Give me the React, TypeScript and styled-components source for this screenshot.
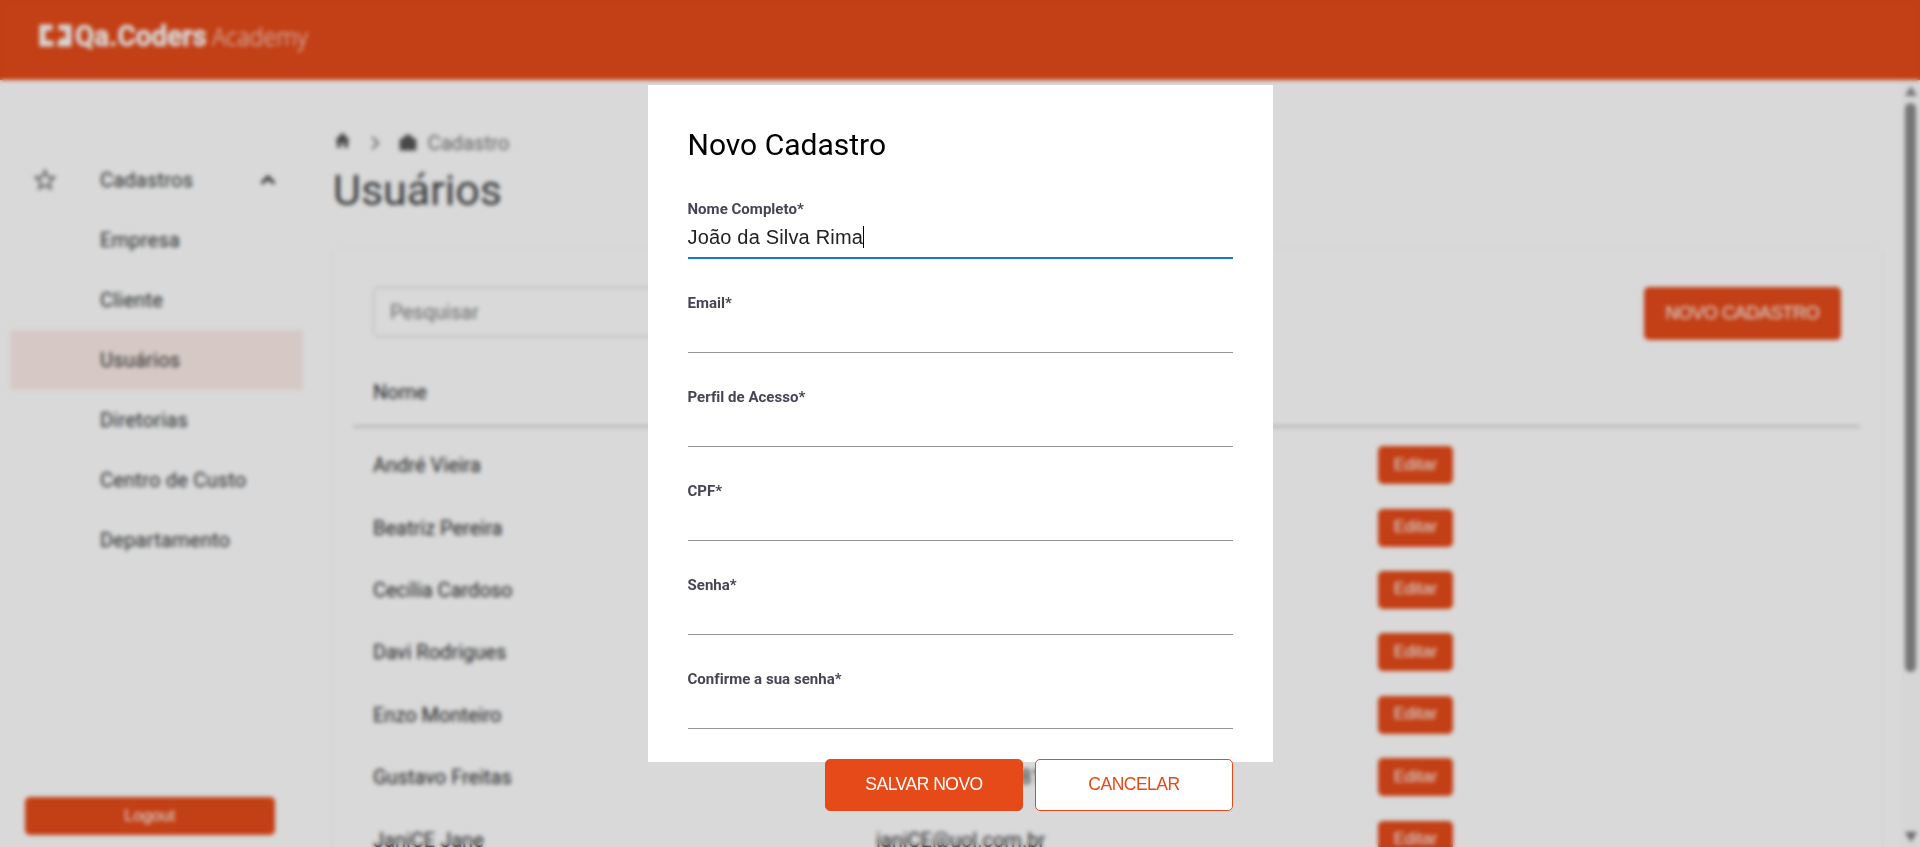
import React from 'react';
import styled, { createGlobalStyle } from 'styled-components';

const orange = '#e64a19';
const roboto = "Roboto, 'Noto Sans', sans-serif";
const arial = "'Liberation Sans', Arial, sans-serif";

const GlobalStyle = createGlobalStyle`
  * { box-sizing: border-box; }
  body { margin: 0; background: #fff; overflow: hidden; font-family: ${roboto}; }
  h1, h2 { margin: 0; font-weight: 400; }
`;

const Page = styled.div`
  display: flex;
  flex-direction: column;
  height: 847px;
  overflow: hidden;
`;

const Header = styled.header`
  flex: none;
  height: 80px;
  padding: 10px 0 0 39px;
  background: ${orange};
`;

const Body = styled.div`
  flex: 1;
  min-height: 0;
  display: flex;
`;

const Sidebar = styled.nav`
  flex: none;
  width: 313px;
  display: flex;
  flex-direction: column;
  padding: 70px 10px 12px;
`;

const NavItem = styled.div<{ $active?: boolean }>`
  flex: none;
  height: 60px;
  display: flex;
  align-items: center;
  width: 293px;
  padding: 0 22px 0 90px;
  border-radius: 4px;
  background: ${p => (p.$active ? 'rgba(230, 74, 25, 0.1)' : 'transparent')};
  font-size: 20px;
  letter-spacing: 0.22px;
  color: #2e3133;
`;

const NavGroup = styled(NavItem)`
  justify-content: space-between;
  padding-left: 21px;
`;

const GroupLabel = styled.span`
  flex: 1;
  margin-left: 41px;
`;

const Logout = styled.button`
  flex: none;
  height: 38.5px;
  margin: auto 28px 0 14.5px;
  padding: 0;
  border: 0;
  border-radius: 5px;
  background: ${orange};
  color: #fff;
  font: 16.7px ${arial};
`;

const Main = styled.main`
  flex: 1;
  min-width: 0;
  padding: 46px 19px 0 20px;
`;

const Crumbs = styled.div`
  display: flex;
  align-items: center;
  height: 34px;
  color: #777;
  font-size: 20.2px;
`;

const HomeIcon = styled.svg`
  margin: 0 1px 5px 0;
`;

const CrumbText = styled.span`
  margin-left: 9.5px;
`;

const PageTitle = styled.h1`
  height: 60px;
  line-height: 61px;
  font-size: 43px;
  color: #3c4043;
`;

const Card = styled.section`
  margin-top: 29px;
  height: 700px;
  padding: 38px 22px 0 20px;
  border-radius: 5px;
  box-shadow: 0 1px 3px rgba(0, 0, 0, 0.12);
`;

const Toolbar = styled.div`
  display: flex;
  justify-content: space-between;
  align-items: flex-start;
  padding: 0 19px 0 20px;
`;

const Search = styled.div`
  width: 375px;
  height: 50px;
  padding-left: 16px;
  border: 1.5px solid #ccc;
  border-radius: 5px;
  display: flex;
  align-items: center;
  font-size: 20px;
  color: #808080;
`;

const NewButton = styled.button`
  width: 197px;
  height: 53px;
  padding: 0 0 1px;
  border: 0;
  border-radius: 5px;
  background: ${orange};
  color: #fff;
  font: 18.2px ${arial};
  letter-spacing: -0.45px;
`;

const Row = styled.div`
  display: grid;
  grid-template-columns: 503px 502px 1fr;
  align-items: center;
  height: 62.4px;
  padding-left: 20px;
  font-size: 20px;
  color: #27282a;
`;

const HeadRow = styled(Row)`
  height: 88px;
  padding-top: 19px;
  border-bottom: 3px solid #dcdcdc;
  margin-bottom: 6px;
`;

const EditButton = styled.button`
  width: 75px;
  height: 38px;
  padding: 0 0 1px;
  border: 0;
  border-radius: 5px;
  background: ${orange};
  color: #fff;
  font: 16.7px ${arial};
`;

const ScrollTrack = styled.div`
  flex: none;
  width: 19px;
  display: flex;
  flex-direction: column;
  align-items: center;
  padding: 6px 0 5px;
  background: #fcfcfc;
`;

const Thumb = styled.div`
  width: 11px;
  height: 569px;
  margin: 7px 0 auto;
  border-radius: 6px;
  background: #8b8b8b;
`;

const Backdrop = styled.div`
  position: fixed;
  inset: 0;
  display: flex;
  justify-content: center;
  align-items: flex-start;
  padding-top: 85px;
  background: rgba(0, 0, 0, 0.15);
  backdrop-filter: blur(2px);
`;

const Modal = styled.div`
  width: 625px;
  height: 677px;
  padding: 40px 40px 0;
  background: #fff;
`;

const ModalTitle = styled.h2`
  height: 40px;
  line-height: 40px;
  font-size: 30px;
  color: #000;
`;

const Field = styled.label`
  display: flex;
  flex-direction: column;
  height: 94px;
  padding-top: 34px;
`;

const FieldLabel = styled.span`
  height: 20px;
  line-height: 20px;
  font-size: 15px;
  font-weight: 700;
  letter-spacing: 0.03px;
  color: #464555;
`;

const FieldValue = styled.span<{ $focused?: boolean }>`
  display: flex;
  align-items: center;
  height: 40px;
  padding-bottom: 2px;
  border-bottom: ${p => (p.$focused ? '2px solid #1976d2' : '1px solid #949494')};
  font: 20px ${arial};
  letter-spacing: 0.18px;
  color: #212121;
`;

const Caret = styled.i`
  width: 1px;
  height: 22px;
  background: #000;
`;

const Actions = styled.div`
  display: flex;
  justify-content: flex-end;
  gap: 12px;
  margin-top: 30px;
`;

const ActionButton = styled.button<{ $outlined?: boolean }>`
  width: 198px;
  height: 52px;
  padding: 0 0 1px 1px;
  border: 1px solid ${orange};
  border-radius: 5px;
  background: ${p => (p.$outlined ? '#fff' : orange)};
  color: ${p => (p.$outlined ? orange : '#fff')};
  font: 17.5px ${arial};
  letter-spacing: -0.5px;
`;

const navItems = ['Empresa', 'Cliente', 'Usuários', 'Diretorias', 'Centro de Custo', 'Departamento'];

const users: { name: string; email?: string }[] = [
  { name: 'André Vieira' },
  { name: 'Beatriz Pereira' },
  { name: 'Cecília Cardoso' },
  { name: 'Davi Rodrigues' },
  { name: 'Enzo Monteiro' },
  { name: 'Gustavo Freitas', email: 'gustavo.freitas181@qa.com' },
  { name: 'JaniCE Jane', email: 'janiCE@uol.com.br' },
];

const fields = [
  { label: 'Nome Completo*', value: 'João da Silva Rima' },
  { label: 'Email*' },
  { label: 'Perfil de Acesso*' },
  { label: 'CPF*' },
  { label: 'Senha*' },
  { label: 'Confirme a sua senha*' },
];

const Logo = () => (
  <svg width="275" height="56" viewBox="0 0 275 56">
    <path d="M0.500 14.500h13v6h-7v10h8v6h-14zM19.500 14.500h13v22h-14v-5l5-4.500 3 3v-9.500h-7z" fill="#fff" />
    <text x="36" y="36" fontFamily="Roboto, sans-serif" fontWeight="700" fontSize="30" fill="#fff" stroke="#fff" strokeWidth="0.5" textLength="132" lengthAdjust="spacingAndGlyphs">Qa.Coders</text>
    <text x="173" y="35.5" fontFamily="Noto Sans, sans-serif" fontWeight="300" fontSize="25.5" fill="#fff" fillOpacity="0.85" textLength="96" lengthAdjust="spacingAndGlyphs">Academy</text>
  </svg>
);

export default function App() {
  return (
    <>
      <GlobalStyle />
      <Page>
        <Header><Logo /></Header>
        <Body>
          <Sidebar>
            <NavGroup>
              <svg width="28" height="28" viewBox="0 0 24 24" fill="#666">
                <path d="M22 9.24l-7.19-.62L12 2 9.19 8.63 2 9.24l5.46 4.73L5.82 21 12 17.27 18.18 21l-1.63-7.03L22 9.24zM12 15.4l-3.76 2.27 1-4.28-3.32-2.88 4.38-.38L12 6.1l1.71 4.04 4.38.38-3.32 2.88 1 4.28L12 15.4z" />
              </svg>
              <GroupLabel>Cadastros</GroupLabel>
              <svg width="26" height="26" viewBox="0 0 24 24" fill="#333"><path d="M12 8l-6 6 1.41 1.41L12 10.83l4.59 4.58L18 14z" stroke="#333" strokeWidth="1" /></svg>
            </NavGroup>
            {navItems.map(item => (
              <NavItem key={item} $active={item === 'Usuários'}>{item}</NavItem>
            ))}
            <Logout>Logout</Logout>
          </Sidebar>
          <Main>
            <Crumbs>
              <HomeIcon width="19" height="19" viewBox="0 0 24 24" fill="#555"><path d="M10 21v-6h4v6h5v-9h2.500L12 2 2.500 12H5v9z" /></HomeIcon>
              <svg width="45" height="22" viewBox="0 0 45 22" fill="none" stroke="#777" strokeWidth="2"><path d="M19 5l6 6-6 6" /></svg>
              <svg width="20" height="22" viewBox="0 0 24 24" fill="#555"><path d="M20 6h-3.500V4l-2-2h-5l-2 2v2H4L2 8v13h20V8z" /></svg>
              <CrumbText>Cadastro</CrumbText>
            </Crumbs>
            <PageTitle>Usuários</PageTitle>
            <Card>
              <Toolbar>
                <Search>Pesquisar</Search>
                <NewButton>NOVO CADASTRO</NewButton>
              </Toolbar>
              <HeadRow><span>Nome</span></HeadRow>
              {users.map(u => (
                <Row key={u.name}>
                  <span>{u.name}</span>
                  <span>{u.email}</span>
                  <EditButton>Editar</EditButton>
                </Row>
              ))}
            </Card>
          </Main>
          <ScrollTrack>
            <svg width="12" height="10" viewBox="0 0 12 10"><path d="M6 0l6 10H0z" fill="#8b8b8b" /></svg>
            <Thumb />
            <svg width="12" height="10" viewBox="0 0 12 10"><path d="M6 10l6-10H0z" fill="#777" /></svg>
          </ScrollTrack>
        </Body>
      </Page>
      <Backdrop>
        <Modal>
          <ModalTitle>Novo Cadastro</ModalTitle>
          {fields.map(f => (
            <Field key={f.label}>
              <FieldLabel>{f.label}</FieldLabel>
              <FieldValue $focused={!!f.value}>{f.value}{f.value && <Caret />}</FieldValue>
            </Field>
          ))}
          <Actions>
            <ActionButton>SALVAR NOVO</ActionButton>
            <ActionButton $outlined>CANCELAR</ActionButton>
          </Actions>
        </Modal>
      </Backdrop>
    </>
  );
}
